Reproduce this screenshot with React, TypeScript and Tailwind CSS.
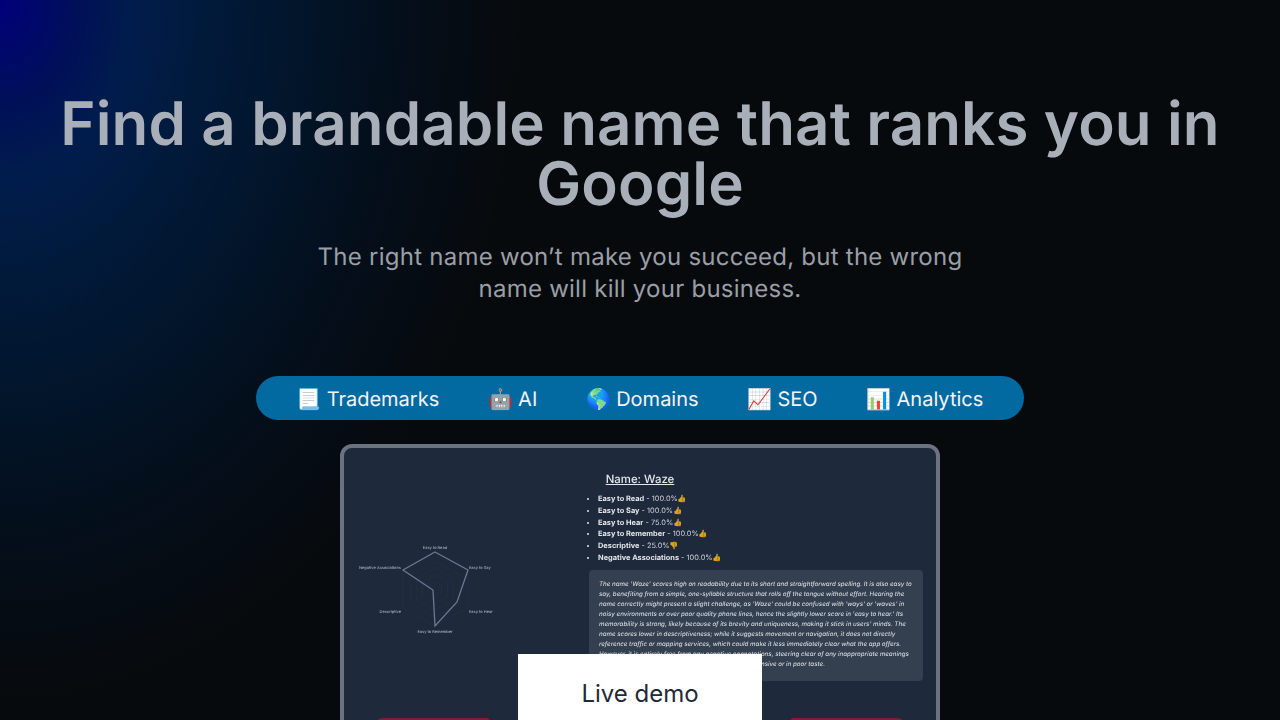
import React from 'react';

const features = [
  { icon: '📃', label: 'Trademarks' },
  { icon: '🤖', label: 'AI' },
  { icon: '🌎', label: 'Domains' },
  { icon: '📈', label: 'SEO' },
  { icon: '📊', label: 'Analytics' },
];

const scores = [
  { name: 'Easy to Read', value: '100.0%', icon: '👍' },
  { name: 'Easy to Say', value: '100.0%', icon: '👍' },
  { name: 'Easy to Hear', value: '75.0%', icon: '👍' },
  { name: 'Easy to Remember', value: '100.0%', icon: '👍' },
  { name: 'Descriptive', value: '25.0%', icon: '👎' },
  { name: 'Negative Associations', value: '100.0%', icon: '👍' },
];

// hexagon rings of the radar chart, centre (91, 46), radius 37
const hexPoints = (r: number) =>
  [0, 1, 2, 3, 4, 5]
    .map((i) => {
      const a = (Math.PI / 3) * i - Math.PI / 2;
      return `${91 + r * Math.cos(a) * 1.03},${46 + r * Math.sin(a)}`;
    })
    .join(' ');

const Radar: React.FC = () => (
  <svg width="245" height="110" viewBox="0 0 245 110" className="block">
    {[7, 14, 21, 28, 37].map((r) => (
      <polygon key={r} points={hexPoints(r)} fill="none" stroke="#27344a" strokeWidth="0.5" />
    ))}
    <polygon
      points="91,9 124,27 113,59 91,83 89,47 59,27"
      fill="none"
      stroke="#6b7894"
      strokeWidth="1.3"
    />
    <g fill="#a3acb9" fontSize="3.95" fontWeight="500" fontFamily="Inter, sans-serif">
      <text x="91" y="6" textAnchor="middle">Easy to Read</text>
      <text x="125" y="25.5">Easy to Say</text>
      <text x="125" y="69.5">Easy to Hear</text>
      <text x="91" y="89.5" textAnchor="middle">Easy to Remember</text>
      <text x="57" y="69.5" textAnchor="end">Descriptive</text>
      <text x="57" y="25.5" textAnchor="end">Negative Associations</text>
    </g>
  </svg>
);

export default function App() {
  return (
    <div className="relative h-screen overflow-hidden bg-[#070a0d] bg-[radial-gradient(ellipse_520px_700px_at_0_0,#00007a_0%,#001058_15%,#001c4c_25%,#011a3a_40%,#021428_60%,#040e1a_77%,#070a0d_100%)] font-['Inter',sans-serif] [text-rendering:geometricPrecision]">
      <div className="flex flex-col items-center pt-[94px]">
        <h1 className="w-full px-8 text-center text-[60px] font-semibold leading-[60px] tracking-[0.15px] text-[#a9afb9]">
          Find a brandable name that ranks you in Google
        </h1>
        <p className="mt-[27px] w-[672px] text-center text-2xl leading-8 tracking-[0.25px] text-[#9a9fa6]">
          The right name won’t make you succeed, but the wrong name will kill your business.
        </p>

        <div className="mt-[71px] flex h-11 w-[768px] items-center justify-center gap-[49px] rounded-3xl bg-[#0369a1] pt-px text-xl text-[#f3f4f6]">
          {features.map((f) => (
            <span key={f.label} className="flex items-center gap-[5px]">
              <span>{f.icon}</span>
              {f.label}
            </span>
          ))}
        </div>

        <div className="mt-6 w-[600px] rounded-xl border-4 border-[#6b7280] bg-[#1e293b]">
          <div className="pt-[23px] blur-[0.4px]">
            <h2 className="text-center text-[11.4px] font-medium leading-4 text-[#e5e7eb] underline">Name: Waze</h2>
            <div className="flex">
              <div className="w-[245px] shrink-0 pt-[56px]">
                <Radar />
              </div>
              <div className="w-[334px]">
                <ul className="mt-[6px] list-disc pl-[9px] text-[7.4px] leading-[11.75px] text-[#d1d5db] marker:text-[#e5e7eb]">
                  {scores.map((s) => (
                    <li key={s.name}>
                      <b className="text-[#e5e7eb]">{s.name}</b>
                      <span> - {s.value}</span>
                      <span className="opacity-80">{s.icon}</span>
                    </li>
                  ))}
                </ul>
                <div className="mt-[6px] h-[111px] rounded-sm bg-[#343f50] pl-[10px] pr-[9px] pt-[10px] text-[6.2px] font-medium italic leading-[10.05px] text-[#d1d5db]">
                  The name 'Waze' scores high on readability due to its short and straightforward spelling. It is also easy to say, benefiting from a simple, one-syllable structure that rolls off the tongue without effort. Hearing the name correctly might present a slight challenge, as 'Waze' could be confused with 'ways' or 'waves' in noisy environments or over poor quality phone lines, hence the slightly lower score in 'easy to hear.' Its memorability is strong, likely because of its brevity and uniqueness, making it stick in users' minds. The name scores lower in descriptiveness; while it suggests movement or navigation, it does not directly reference traffic or mapping services, which could make it less immediately clear what the app offers. However, it is entirely free from any negative connotations, steering clear of any inappropriate meanings and ensuring that it is not likely to be perceived as offensive or in poor taste.
                </div>
              </div>
            </div>
            <div className="mt-[37px] flex justify-between px-[34px]">
              <div className="h-8 w-[112px] rounded bg-[#7f1d35]" />
              <div className="h-8 w-[112px] rounded bg-[#7f1d35]" />
            </div>
          </div>
        </div>
      </div>

      <button className="absolute left-[518px] top-[654px] h-[80px] w-[244px] bg-white text-2xl text-[#1f2937]">
        Live demo
      </button>
    </div>
  );
}
